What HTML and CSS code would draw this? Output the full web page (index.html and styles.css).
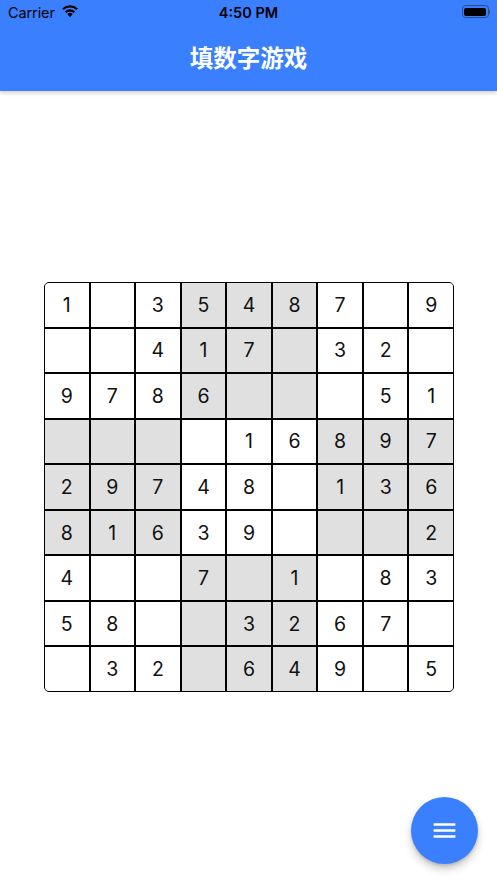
FILE: index.html
```html
<!DOCTYPE html>
<html>
<head>
<meta charset="utf-8">
<link rel="stylesheet" href="styles.css">
</head>
<body>
<div class="app">
  <header class="appbar">
    <div class="status">
      <div class="status-left">
        <span class="carrier">Carrier</span>
        <svg class="wifi" width="18" height="14" viewBox="0 0 18 14">
          <path d="M9 13.2 L6.3 10.1 A4 4 0 0 1 11.7 10.1 Z" fill="#000"/>
          <path d="M3.9 7.4 A7.4 7.4 0 0 1 14.1 7.4 L12.6 9.1 A5.2 5.2 0 0 0 5.4 9.1 Z" fill="#000"/>
          <path d="M1.2 4.4 A11.4 11.4 0 0 1 16.8 4.4 L15.3 6.1 A9.2 9.2 0 0 0 2.7 6.1 Z" fill="#000"/>
        </svg>
      </div>
      <span class="time">4:50 PM</span>
      <div class="battery"><div class="battery-body"><div class="battery-fill"></div></div><div class="battery-nub"></div></div>
    </div>
    <div class="toolbar"><h1 class="title">填数字游戏</h1></div>
  </header>
  <main class="content">
    <div class="board" id="board"></div>
  </main>
  <button class="fab" aria-label="menu">
    <svg width="29" height="29" viewBox="0 0 24 24"><path d="M3 18h18v-2H3v2zm0-5h18v-2H3v2zm0-7v2h18V6H3z" fill="#fff"/></svg>
  </button>
</div>
<script>
var rows = [
  "1.35487.9",
  "..417.32.",
  "9786...51",
  "....16897",
  "29748.136",
  "81639...2",
  "4..7.1.83",
  "58..3267.",
  ".32.649.5"
];
var board = document.getElementById("board");
for (var r = 0; r < 9; r++) {
  for (var c = 0; c < 9; c++) {
    var d = document.createElement("div");
    var br = Math.floor(r / 3), bc = Math.floor(c / 3);
    d.className = "cell" + (((br + bc) % 2 === 1) ? " shade" : "");
    var ch = rows[r].charAt(c);
    d.textContent = ch === "." ? "" : ch;
    board.appendChild(d);
  }
}
</script>
</body>
</html>
```
FILE: styles.css
```css
* { box-sizing: border-box; }
html, body { margin: 0; padding: 0; }
body {
  width: 497px;
  height: 883px;
  background: #fff;
  font-family: Inter, "Liberation Sans", "Noto Sans CJK SC", sans-serif;
  overflow: hidden;
}
.app {
  position: relative;
  width: 497px;
  height: 883px;
  display: flex;
  flex-direction: column;
}
.appbar {
  background: #3a7ffe;
  box-shadow: 0 2px 4px rgba(0,0,0,0.18);
  position: relative;
  z-index: 1;
}
.status {
  height: 24px;
  display: flex;
  align-items: center;
  justify-content: space-between;
  padding: 0 7px 0 8px;
  position: relative;
}
.status-left {
  display: flex;
  align-items: center;
  gap: 6px;
}
.carrier {
  font-size: 14.5px;
  color: #000;
  letter-spacing: -0.1px;
}
.wifi { margin-top: -2px; }
.time {
  position: absolute;
  left: 0;
  right: 0;
  text-align: center;
  font-size: 14.5px;
  font-weight: 600;
  color: #000;
  pointer-events: none;
}
.battery {
  display: flex;
  align-items: center;
  margin-top: -1px;
}
.battery-body {
  width: 27px;
  height: 13px;
  border: 1px solid #2b4d80;
  border-radius: 3.5px;
  padding: 1.5px;
}
.battery-fill {
  width: 100%;
  height: 100%;
  background: #000;
  border-radius: 2px;
}
.battery-nub {
  width: 1.5px;
  height: 4px;
  background: #2b4d80;
  border-radius: 0 1px 1px 0;
}
.toolbar {
  height: 67px;
  display: flex;
  align-items: center;
  justify-content: center;
}
.title {
  margin: 0;
  color: #fff;
  font-family: "Noto Sans CJK SC", sans-serif;
  font-size: 23.5px;
  font-weight: 700;
  padding-bottom: 2px;
}
.content {
  flex: 1;
  display: flex;
  align-items: center;
  justify-content: center;
  padding-left: 1px;
}
.board {
  width: 410px;
  height: 410px;
  border: 1px solid #000;
  border-radius: 5px;
  overflow: hidden;
  background: #000;
  display: grid;
  grid-template-columns: repeat(9, 1fr);
  grid-template-rows: repeat(9, 1fr);
  gap: 2px;
}
.cell {
  background: #fff;
  display: flex;
  align-items: center;
  justify-content: center;
  font-size: 19.5px;
  color: #111;
}
.cell.shade { background: #e0e0e0; }
.fab {
  position: absolute;
  right: 19px;
  bottom: 19px;
  width: 67px;
  height: 67px;
  border-radius: 50%;
  border: none;
  background: #3a7ffe;
  box-shadow: 0 5px 8px rgba(0,0,0,0.2), 0 2px 3px rgba(0,0,0,0.12);
  display: flex;
  align-items: center;
  justify-content: center;
  padding: 0;
}
```
